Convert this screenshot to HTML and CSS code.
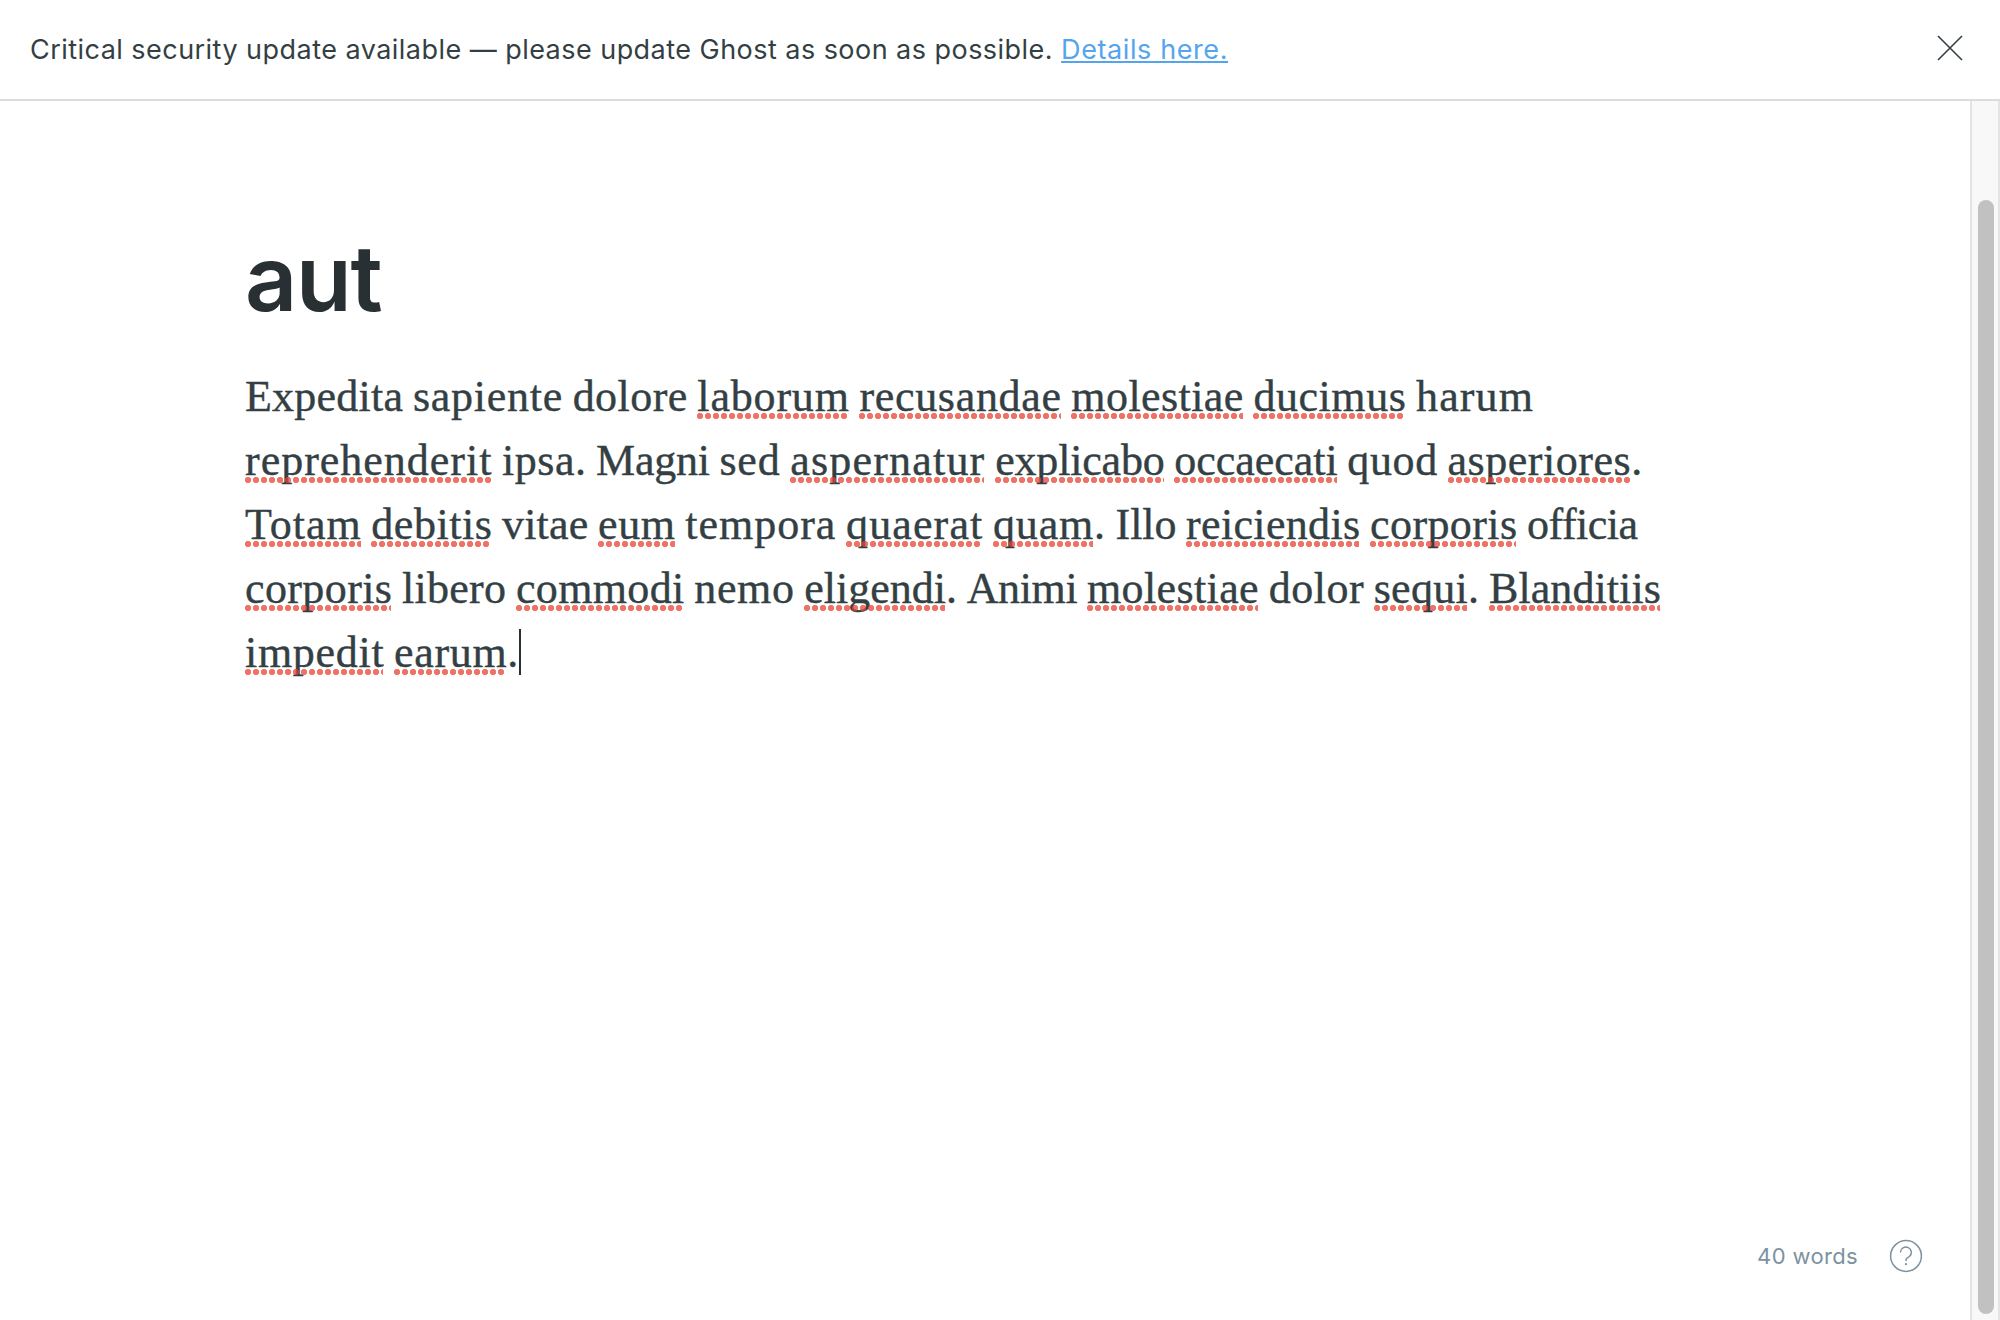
FILE: index.html
```
<!DOCTYPE html>
<html lang="en">
<head>
<meta charset="utf-8">
<title>aut – Ghost</title>
<link rel="stylesheet" href="styles.css">
</head>
<body>
<header class="alert">
  <p class="alert-text">Critical security update available — please update Ghost as soon as possible. <a class="alert-link" href="#">Details here.</a></p>
  <button class="close" aria-label="Close">
    <svg width="26" height="26" viewBox="0 0 26 26"><path d="M1 1l24 24M25 1L1 25"/></svg>
  </button>
</header>
<div class="workspace">
  <main class="editor">
    <article class="post">
      <h1 class="title">aut</h1>
      <div class="body">
        <p class="line"><span style="letter-spacing:.23px">Expedita</span> <span style="letter-spacing:.74px">sapiente</span> <span style="letter-spacing:.44px">dolore</span> <span class="typo" style="letter-spacing:.82px">laborum</span> <span class="typo" style="letter-spacing:.69px">recusandae</span> <span class="typo" style="letter-spacing:.42px">molestiae</span> <span class="typo" style="letter-spacing:.55px">ducimus</span> <span style="letter-spacing:1.14px">harum</span></p>
        <p class="line"><span class="typo" style="letter-spacing:.99px">reprehenderit</span> <span style="letter-spacing:.5px">ipsa.</span> <span style="letter-spacing:-.24px">Magni</span> <span style="letter-spacing:.79px">sed</span> <span class="typo" style="letter-spacing:1.21px">aspernatur</span> <span class="typo" style="letter-spacing:-.18px">explicabo</span> <span class="typo" style="letter-spacing:-.03px">occaecati</span> <span style="letter-spacing:.66px">quod</span> <span style="letter-spacing:.53px"><span class="typo">asperiores</span>.</span></p>
        <p class="line"><span class="typo" style="letter-spacing:.97px">Totam</span> <span class="typo" style="letter-spacing:.53px">debitis</span> <span style="letter-spacing:.17px">vitae</span> <span class="typo" style="letter-spacing:.63px">eum</span> <span style="letter-spacing:.98px">tempora</span> <span class="typo" style="letter-spacing:1.13px">quaerat</span> <span style="letter-spacing:.82px"><span class="typo">quam</span>.</span> <span style="letter-spacing:-.06px">Illo</span> <span class="typo" style="letter-spacing:.33px">reiciendis</span> <span class="typo" style="letter-spacing:.39px">corporis</span> <span style="letter-spacing:-.5px">officia</span></p>
        <p class="line"><span class="typo" style="letter-spacing:.39px">corporis</span> <span style="letter-spacing:.28px">libero</span> <span class="typo" style="letter-spacing:.35px">commodi</span> <span style="letter-spacing:.65px">nemo</span> <span style="letter-spacing:0"><span class="typo">eligendi</span>.</span> <span style="letter-spacing:-.36px">Animi</span> <span class="typo" style="letter-spacing:.38px">molestiae</span> <span style="letter-spacing:.5px">dolor</span> <span style="letter-spacing:.29px"><span class="typo">sequi</span>.</span> <span class="typo" style="letter-spacing:.08px">Blanditiis</span></p>
        <p class="line"><span class="typo" style="letter-spacing:.7px">impedit</span> <span style="letter-spacing:.67px"><span class="typo">earum</span>.</span><span class="caret"></span></p>
      </div>
    </article>
    <footer class="status">
      <span class="count">40 words</span>
      <svg class="help" width="34" height="34" viewBox="0 0 34 34"><circle cx="17" cy="17" r="15.4"/><path d="M11.4 13.4a5.5 5.3 0 1 1 8.9 4.2c-1.9 1.3-3.3 1.7-3.3 3.4v.9"/><circle class="dot" cx="17" cy="25.2" r="1.1"/></svg>
    </footer>
  </main>
  <aside class="scrollbar"><div class="thumb"></div></aside>
</div>
</body>
</html>
```
FILE: styles.css
```
* { box-sizing: border-box; }
body {
  margin: 0;
  height: 1320px;
  display: flex;
  flex-direction: column;
  overflow: hidden;
  background: #fff;
  color: #343f44;
  font-family: Inter, "Liberation Sans", sans-serif;
}
.alert {
  flex: none;
  height: 101px;
  padding: 0 36px 0 30px;
  display: flex;
  align-items: center;
  justify-content: space-between;
  border-bottom: 2px solid #dadddd;
}
.alert-text { margin: 1px 0 0; font-size: 27px; line-height: 40px; letter-spacing: .46px; white-space: nowrap; }
.alert-link {
  color: #55a5ee;
  letter-spacing: .6px;
  text-decoration: underline;
  text-decoration-thickness: 2px;
  text-underline-offset: 2px;
  text-decoration-skip-ink: none;
}
.close { width: 28px; height: 28px; padding: 1px; margin-bottom: 3px; border: 0; background: none; }
.close svg { display: block; fill: none; stroke: #343f44; stroke-width: 1.6; }
.workspace { flex: 1; display: flex; min-height: 0; }
.editor { flex: 1; display: flex; flex-direction: column; justify-content: space-between; }
.post { padding: 122px 0 0 245px; }
.title {
  margin: 0 0 32px;
  font-size: 91px;
  line-height: 110px;
  font-weight: 600;
  letter-spacing: -1.2px;
  color: #283034;
}
.body {
  font-family: "Liberation Serif", serif;
  font-size: 44px;
  line-height: 64px;
  word-spacing: -1.35px;
  -webkit-text-stroke: .4px #343f44;
}
.line { margin: 0; height: 64px; display: block; white-space: nowrap; }
.typo { position: relative; display: inline-block; }
.typo::after {
  content: "";
  position: absolute;
  left: 0;
  right: 1px;
  bottom: 10px;
  height: 6px;
  background: radial-gradient(circle at 3px 3px, rgba(235, 65, 50, .74) 2.8px, transparent 3.5px) 0 0 / 8px 6px repeat-x;
}
.caret { display: inline-block; width: 2px; height: 46px; vertical-align: -8px; background: #283034; }
.status {
  display: flex;
  align-items: center;
  justify-content: flex-end;
  gap: 31px;
  padding: 0 47px 47px 0;
  color: #7d92a0;
}
.count { font-size: 22px; line-height: 34px; letter-spacing: .35px; }
.help { fill: none; stroke: #7d92a0; stroke-width: 1.5; }
.dot { fill: #7d92a0; stroke: none; }
.scrollbar {
  width: 30px;
  padding: 99px 4px 6px 6px;
  display: flex;
  background: #f8f8f8;
  border: solid #e4e4e4;
  border-width: 0 2px;
}
.thumb { width: 16px; border-radius: 8px; background: #c1c1c1; }
```
